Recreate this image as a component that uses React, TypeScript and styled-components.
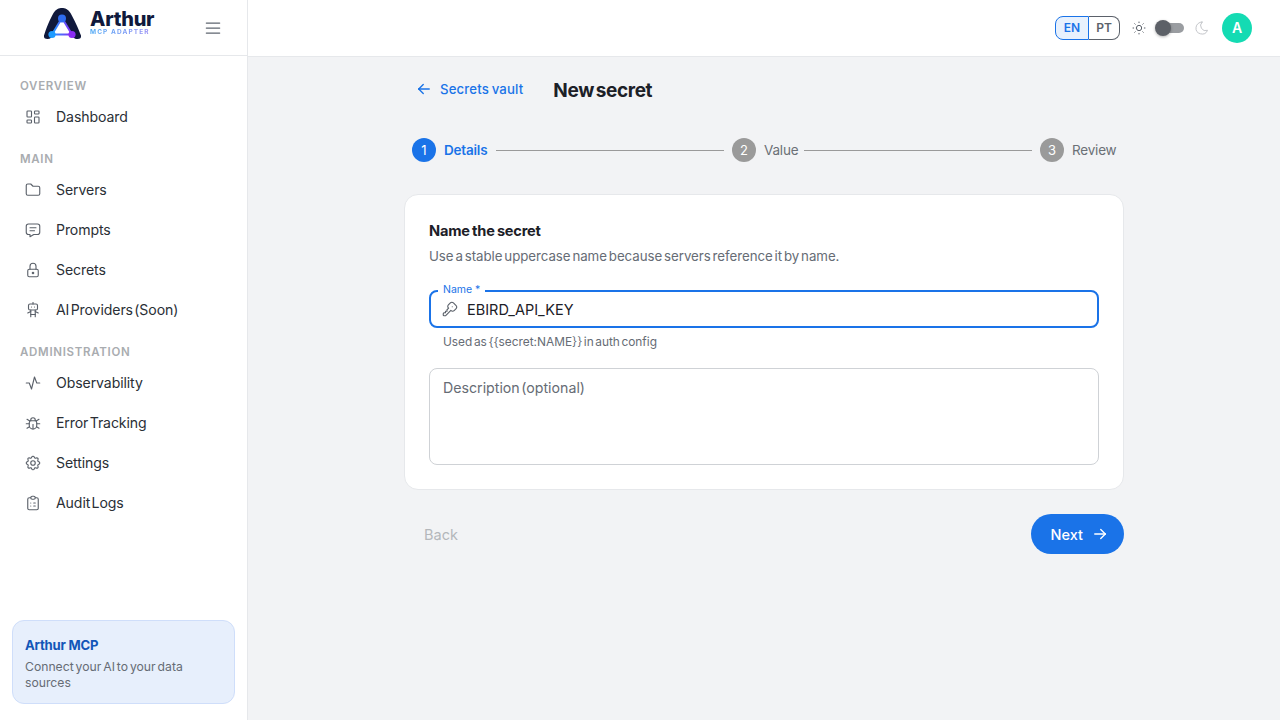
import React from "react";
import styled, { createGlobalStyle } from "styled-components";
import {
  TbActivity,
  TbArrowLeft,
  TbArrowRight,
  TbBug,
  TbClipboardList,
  TbFolder,
  TbKey,
  TbLayoutDashboard,
  TbLock,
  TbMenu2,
  TbMessage,
  TbMoon,
  TbRobot,
  TbSettings,
  TbSun,
} from "react-icons/tb";

const GlobalStyle = createGlobalStyle`
  html, body, #root {
    margin: 0;
    height: 100%;
  }
  body {
    font-family: Inter, "Liberation Sans", sans-serif;
    color: #1c2027;
    background: #f2f3f5;
  }
  * {
    box-sizing: border-box;
  }
`;

const Shell = styled.div`
  display: flex;
  width: 1280px;
  height: 720px;
  overflow: hidden;
`;

const Sidebar = styled.aside`
  display: flex;
  flex-direction: column;
  flex: 0 0 248px;
  background: #fff;
  border-right: 1px solid #e6e8eb;
`;

const Brand = styled.div`
  display: flex;
  align-items: flex-start;
  height: 56px;
  padding: 7px 0 0 43px;
  border-bottom: 1px solid #e6e8eb;
`;

const BrandText = styled.div`
  display: flex;
  flex-direction: column;
  width: 66px;
  margin-left: 8px;
`;

const BrandName = styled.span`
  font-size: 20px;
  line-height: 18px;
  margin-top: 3px;
  font-weight: 800;
  letter-spacing: -0.25px;
  color: #10193c;
`;

const BrandSub = styled.span`
  font-size: 6.5px;
  line-height: 8px;
  font-weight: 700;
  letter-spacing: 1.1px;
  white-space: nowrap;
  background: linear-gradient(90deg, #4aa8f5, #a08cf5);
  -webkit-background-clip: text;
  background-clip: text;
  color: transparent;
`;

const MenuButton = styled.span`
  display: flex;
  margin: 11px 0 0 47px;
  color: #5f6670;
`;

const Nav = styled.nav`
  display: flex;
  flex-direction: column;
  padding: 22px 12px 0;
`;

const SectionLabel = styled.div`
  height: 16px;
  padding-left: 8px;
  font-size: 11.5px;
  line-height: 16px;
  font-weight: 600;
  letter-spacing: 0.7px;
  color: #a9acb0;
  margin-bottom: 3px;
  &:not(:first-child) {
    margin-top: 14px;
  }
`;

const NavItem = styled.a`
  display: flex;
  align-items: center;
  gap: 14px;
  height: 40px;
  padding: 0 0 1px 12px;
  font-size: 14.1px;
  letter-spacing: -0.1px;
  word-spacing: -2.5px;
  color: #2a2f36;
  svg {
    color: #5b616a;
    flex: none;
  }
`;

const InfoCard = styled.div`
  margin: auto 12px 16px;
  height: 84px;
  padding: 14px 12px 0;
  background: #e7effc;
  border: 1px solid #cfdefa;
  border-radius: 12px;
`;

const InfoTitle = styled.div`
  font-size: 13.1px;
  line-height: 20px;
  font-weight: 700;
  letter-spacing: -0.2px;
  color: #1256b8;
`;

const InfoText = styled.div`
  margin-top: 4px;
  font-size: 12.2px;
  line-height: 16px;
  word-spacing: -1.5px;
  color: #666c75;
`;

const Main = styled.div`
  display: flex;
  flex-direction: column;
  flex: 1;
  min-width: 0;
`;

const TopBar = styled.header`
  display: flex;
  align-items: center;
  justify-content: flex-end;
  flex: 0 0 57px;
  padding: 0 28px 1px 0;
  background: #fff;
  border-bottom: 1px solid #e6e8eb;
`;

const LangGroup = styled.div`
  display: flex;
  height: 24px;
  margin-right: 11px;
`;

const LangButton = styled.span<{ $active?: boolean }>`
  display: flex;
  align-items: center;
  justify-content: center;
  width: ${(p) => (p.$active ? "34px" : "31px")};
  font-size: 12px;
  font-weight: 600;
  color: ${(p) => (p.$active ? "#1a73e8" : "#5b616a")};
  background: ${(p) => (p.$active ? "#e8f1fd" : "#fff")};
  border: 1px solid ${(p) => (p.$active ? "#1a73e8" : "#5b616a")};
  border-radius: ${(p) => (p.$active ? "8px 0 0 8px" : "0 8px 8px 0")};
  border-left-width: ${(p) => (p.$active ? "1px" : "0")};
`;

const ThemeIcon = styled.span<{ $muted?: boolean }>`
  display: flex;
  color: ${(p) => (p.$muted ? "#c4c6ca" : "#5b616a")};
`;

const Switch = styled.span`
  position: relative;
  width: 26px;
  height: 10px;
  margin: 0 10px 0 11px;
  border-radius: 5px;
  background: #9a9da1;
`;

const SwitchThumb = styled.span`
  position: absolute;
  left: -3px;
  top: -3px;
  width: 16px;
  height: 16px;
  border-radius: 50%;
  background: #5c6067;
  box-shadow: 0 1px 3px rgba(0, 0, 0, 0.3);
`;

const Avatar = styled.span`
  display: flex;
  align-items: center;
  justify-content: center;
  width: 30px;
  height: 30px;
  margin-left: 12px;
  border-radius: 50%;
  background: #14dbb3;
  color: #fff;
  font-size: 14px;
  font-weight: 600;
`;

const Content = styled.main`
  width: 720px;
  margin: 0 auto;
  padding-top: 17px;
`;

const TitleRow = styled.div`
  display: flex;
  align-items: center;
  height: 32px;
  padding-left: 11px;
`;

const BackLink = styled.a`
  display: flex;
  align-items: center;
  gap: 7px;
  margin-right: 30px;
  margin-top: -2px;
  font-size: 13.2px;
  font-weight: 500;
  letter-spacing: 0.15px;
  word-spacing: -1px;
  color: #1a73e8;
`;

const PageTitle = styled.h1`
  margin: 0;
  font-size: 19px;
  font-weight: 700;
  letter-spacing: -0.35px;
  word-spacing: -2.5px;
  color: #1c2027;
`;

const Stepper = styled.div`
  display: flex;
  align-items: center;
  gap: 8px;
  height: 24px;
  margin-top: 32px;
  padding: 0 8px;
`;

const StepDot = styled.span<{ $active?: boolean }>`
  display: flex;
  align-items: center;
  justify-content: center;
  flex: none;
  width: 24px;
  height: 24px;
  border-radius: 50%;
  font-size: 13px;
  color: #fff;
  background: ${(p) => (p.$active ? "#1a73e8" : "#9a9a9a")};
`;

const StepName = styled.span<{ $active?: boolean; $width: number }>`
  flex: none;
  width: ${(p) => p.$width}px;
  font-size: 13.5px;
  font-weight: ${(p) => (p.$active ? 600 : 400)};
  letter-spacing: -0.2px;
  white-space: nowrap;
  color: ${(p) => (p.$active ? "#1a73e8" : "#6b7076")};
`;

const StepLine = styled.span`
  flex: 1;
  height: 1px;
  background: #9a9a9a;
`;

const Card = styled.section`
  height: 296px;
  margin-top: 32px;
  padding: 24px;
  background: #fff;
  border: 1px solid #e6e8eb;
  border-radius: 14px;
`;

const CardTitle = styled.h2`
  margin: 0;
  font-size: 14.6px;
  line-height: 24px;
  font-weight: 700;
  letter-spacing: -0.2px;
  word-spacing: -1px;
  color: #1c2027;
`;

const CardText = styled.p`
  margin: 1px 0 0;
  font-size: 13.3px;
  line-height: 24px;
  letter-spacing: -0.05px;
  word-spacing: -1.8px;
  color: #666c75;
`;

const NameField = styled.div`
  position: relative;
  display: flex;
  align-items: center;
  gap: 8px;
  height: 38px;
  margin-top: 22px;
  padding-left: 10px;
  border: 2px solid #1a73e8;
  border-radius: 8px;
  svg {
    color: #5b616a;
    flex: none;
  }
`;

const FloatLabel = styled.span`
  position: absolute;
  left: 7px;
  top: -8px;
  padding: 0 5px;
  background: #fff;
  font-size: 10.5px;
  line-height: 12px;
  color: #1a73e8;
`;

const NameValue = styled.span`
  font-size: 14.5px;
  color: #1c2027;
`;

const Helper = styled.div`
  margin: 5px 0 0 14px;
  font-size: 11.9px;
  line-height: 18px;
  word-spacing: -1.8px;
  color: #666c75;
`;

const DescriptionField = styled.div`
  height: 97px;
  margin-top: 17px;
  padding: 9px 13px;
  border: 1px solid #cfd2d6;
  border-radius: 8px;
  font-size: 14.2px;
  line-height: 20px;
  word-spacing: -2.5px;
  color: #666c75;
`;

const Actions = styled.div`
  display: flex;
  align-items: center;
  justify-content: space-between;
  margin-top: 24px;
  padding-left: 20px;
`;

const BackButton = styled.span`
  font-size: 14.5px;
  color: #b4b7bb;
`;

const NextButton = styled.span`
  display: flex;
  align-items: center;
  gap: 8px;
  height: 40px;
  padding: 0 15px 0 20px;
  border-radius: 20px;
  background: #1a73e8;
  color: #fff;
  font-size: 14.5px;
  font-weight: 500;
`;

const sections = [
  {
    title: "OVERVIEW",
    items: [{ label: "Dashboard", Icon: TbLayoutDashboard }],
  },
  {
    title: "MAIN",
    items: [
      { label: "Servers", Icon: TbFolder },
      { label: "Prompts", Icon: TbMessage },
      { label: "Secrets", Icon: TbLock },
      { label: "AI Providers (Soon)", Icon: TbRobot },
    ],
  },
  {
    title: "ADMINISTRATION",
    items: [
      { label: "Observability", Icon: TbActivity },
      { label: "Error Tracking", Icon: TbBug },
      { label: "Settings", Icon: TbSettings },
      { label: "Audit Logs", Icon: TbClipboardList },
    ],
  },
];

const Logo = () => (
  <svg width="39" height="33" viewBox="0 0 39 33">
    <defs>
      <linearGradient id="tri" x1="0" y1="1" x2="1" y2="1">
        <stop offset="0" stopColor="#1e9bff" />
        <stop offset="1" stopColor="#8a2cf5" />
      </linearGradient>
    </defs>
    <path
      d="M1 28.5C3 22 7 12 10.500 6C13 2 16 1 19 1C22 1 25 2 27.500 6C31 12 35.500 22 38 28.500C38.500 31 37 32 34.500 32C31 32 30 30 28 27.500H10.500C9 30 7.500 32 4.500 32C2 32 .5 31 1 28.500Z"
      fill="#10193c"
    />
    <path d="M19 11L9 27.500H29Z" fill="#fff" stroke="url(#tri)" strokeWidth="2" />
    <circle cx="19" cy="11.500" r="4" fill="#2f6cf0" />
    <circle cx="9" cy="27.500" r="3.600" fill="#1e9bff" />
    <circle cx="29" cy="27.500" r="3.600" fill="#8a2cf5" />
  </svg>
);

export default function App() {
  return (
    <>
      <GlobalStyle />
      <Shell>
        <Sidebar>
          <Brand>
            <Logo />
            <BrandText>
              <BrandName>Arthur</BrandName>
              <BrandSub>MCP ADAPTER</BrandSub>
            </BrandText>
            <MenuButton>
              <TbMenu2 size={20} strokeWidth={1.5} />
            </MenuButton>
          </Brand>
          <Nav>
            {sections.map((section) => (
              <React.Fragment key={section.title}>
                <SectionLabel>{section.title}</SectionLabel>
                {section.items.map(({ label, Icon }) => (
                  <NavItem key={label}>
                    <Icon size={18} strokeWidth={1.5} />
                    {label}
                  </NavItem>
                ))}
              </React.Fragment>
            ))}
          </Nav>
          <InfoCard>
            <InfoTitle>Arthur MCP</InfoTitle>
            <InfoText>Connect your AI to your data sources</InfoText>
          </InfoCard>
        </Sidebar>
        <Main>
          <TopBar>
            <LangGroup>
              <LangButton $active>EN</LangButton>
              <LangButton>PT</LangButton>
            </LangGroup>
            <ThemeIcon>
              <TbSun size={16} strokeWidth={1.5} />
            </ThemeIcon>
            <Switch>
              <SwitchThumb />
            </Switch>
            <ThemeIcon $muted>
              <TbMoon size={16} strokeWidth={1.5} />
            </ThemeIcon>
            <Avatar>A</Avatar>
          </TopBar>
          <Content>
            <TitleRow>
              <BackLink>
                <TbArrowLeft size={18} strokeWidth={1.8} />
                Secrets vault
              </BackLink>
              <PageTitle>New secret</PageTitle>
            </TitleRow>
            <Stepper>
              <StepDot $active>1</StepDot>
              <StepName $active $width={44}>
                Details
              </StepName>
              <StepLine />
              <StepDot>2</StepDot>
              <StepName $width={32}>Value</StepName>
              <StepLine />
              <StepDot>3</StepDot>
              <StepName $width={44}>Review</StepName>
            </Stepper>
            <Card>
              <CardTitle>Name the secret</CardTitle>
              <CardText>
                Use a stable uppercase name because servers reference it by name.
              </CardText>
              <NameField>
                <FloatLabel>Name *</FloatLabel>
                <TbKey size={18} strokeWidth={1.5} />
                <NameValue>EBIRD_API_KEY</NameValue>
              </NameField>
              <Helper>{"Used as {{secret:NAME}} in auth config"}</Helper>
              <DescriptionField>Description (optional)</DescriptionField>
            </Card>
            <Actions>
              <BackButton>Back</BackButton>
              <NextButton>
                Next
                <TbArrowRight size={18} strokeWidth={1.8} />
              </NextButton>
            </Actions>
          </Content>
        </Main>
      </Shell>
    </>
  );
}
